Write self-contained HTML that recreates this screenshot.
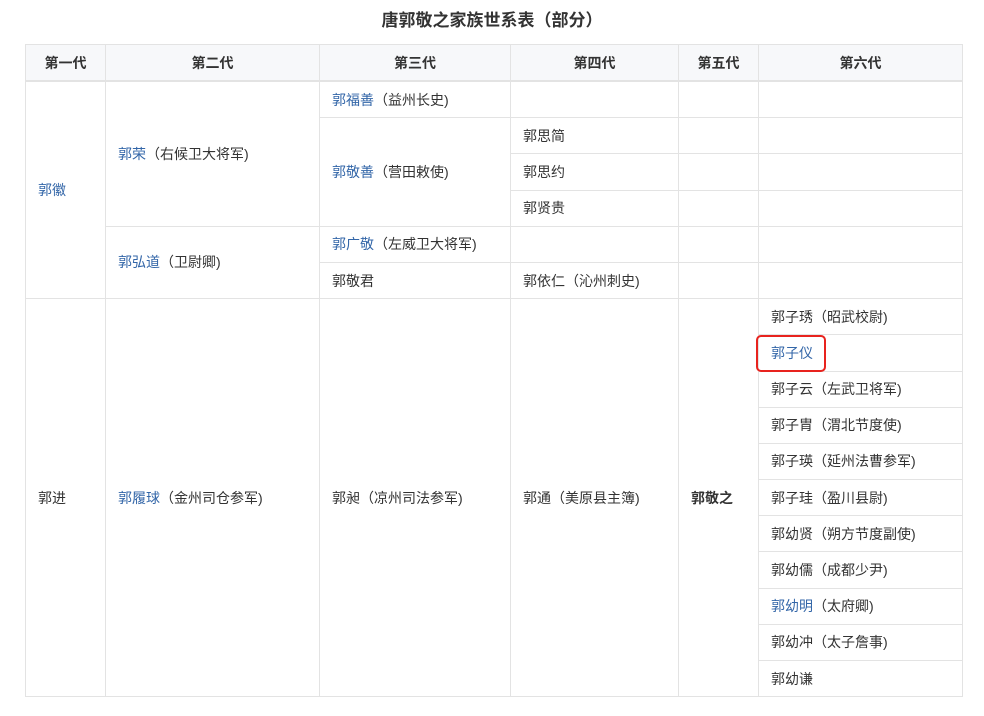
<!DOCTYPE html>
<html><head><meta charset="utf-8"><style>
body{margin:0;background:#fff;font-family:"Liberation Sans","Noto Sans CJK SC",sans-serif;color:#333;font-size:14px;}
h1{position:absolute;left:0;width:984px;top:9px;margin:0;text-align:center;font-size:17px;font-weight:bold;color:#333;line-height:24px}
table{position:absolute;left:25px;top:44px;border-collapse:collapse;table-layout:fixed;width:937px}
td,th{border:1px solid #e3e3e3;padding:0 0 0 12px;text-align:left;vertical-align:middle;white-space:nowrap}
th{background:#f7f8fa;text-align:center;padding:0;font-weight:bold;height:35px;border-bottom:2px solid #e3e3e3}
tr.r td{height:35.2px}
a{color:#3366a8;text-decoration:none}
.b{font-weight:bold}
.box{position:absolute;left:756px;top:335px;width:66px;height:33px;border:2.5px solid #e8231e;border-radius:5px}
</style></head><body>
<h1>唐郭敬之家族世系表（部分）</h1>
<table>
<colgroup><col style="width:80px"><col style="width:214px"><col style="width:191px"><col style="width:168px"><col style="width:80px"><col style="width:204px"></colgroup>
<tr><th>第一代</th><th>第二代</th><th>第三代</th><th>第四代</th><th>第五代</th><th>第六代</th></tr>
<tr class="r"><td rowspan="6"><a>郭徽</a></td><td rowspan="4"><a>郭荣</a>（右候卫大将军)</td><td><a>郭福善</a>（益州长史)</td><td></td><td></td><td></td></tr>
<tr class="r"><td rowspan="3"><a>郭敬善</a>（营田敕使)</td><td>郭思简</td><td></td><td></td></tr>
<tr class="r"><td>郭思约</td><td></td><td></td></tr>
<tr class="r"><td>郭贤贵</td><td></td><td></td></tr>
<tr class="r"><td rowspan="2"><a>郭弘道</a>（卫尉卿)</td><td><a>郭广敬</a>（左威卫大将军)</td><td></td><td></td><td></td></tr>
<tr class="r"><td>郭敬君</td><td>郭依仁（沁州刺史)</td><td></td><td></td></tr>
<tr class="r"><td rowspan="11">郭进</td><td rowspan="11"><a>郭履球</a>（金州司仓参军)</td><td rowspan="11">郭昶（凉州司法参军)</td><td rowspan="11">郭通（美原县主簿)</td><td rowspan="11" class="b">郭敬之</td><td>郭子琇（昭武校尉)</td></tr>
<tr class="r"><td><a>郭子仪</a></td></tr>
<tr class="r"><td>郭子云（左武卫将军)</td></tr>
<tr class="r"><td>郭子胄（渭北节度使)</td></tr>
<tr class="r"><td>郭子瑛（延州法曹参军)</td></tr>
<tr class="r"><td>郭子珪（盈川县尉)</td></tr>
<tr class="r"><td>郭幼贤（朔方节度副使)</td></tr>
<tr class="r"><td>郭幼儒（成都少尹)</td></tr>
<tr class="r"><td><a>郭幼明</a>（太府卿)</td></tr>
<tr class="r"><td>郭幼冲（太子詹事)</td></tr>
<tr class="r"><td>郭幼谦</td></tr>
</table>
<div class="box"></div>
</body></html>
